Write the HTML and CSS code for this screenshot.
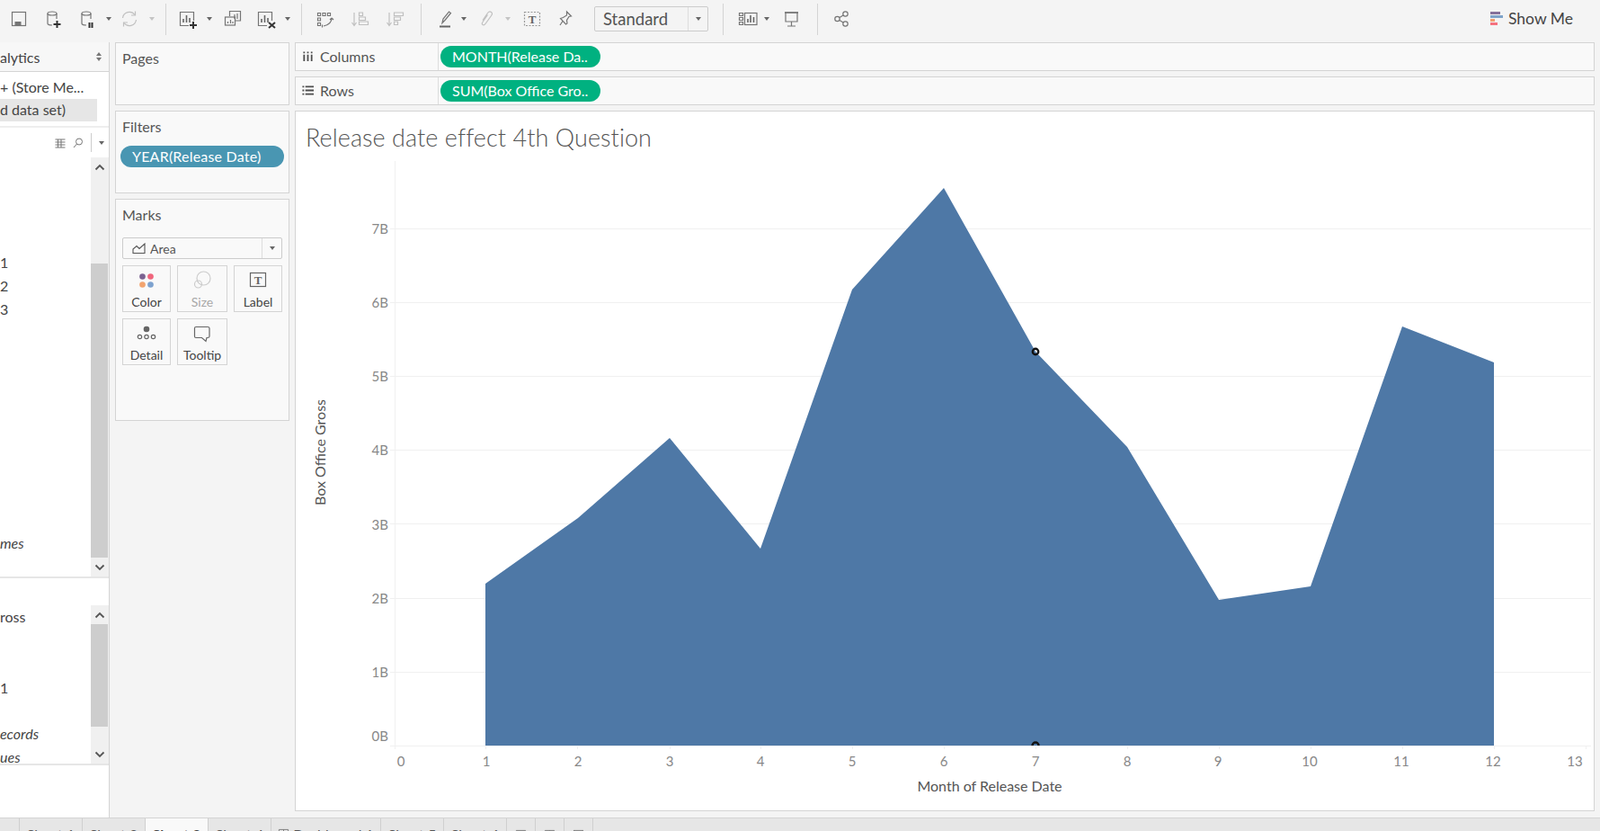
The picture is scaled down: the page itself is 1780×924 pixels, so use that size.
FILE: index.html
```html
<!DOCTYPE html>
<html lang="en">
<head>
    <meta charset="UTF-8">
    <meta name="viewport" content="width=device-width, initial-scale=1.0">
    <title>Release date effect 4th Question</title>
    <link rel="stylesheet" href="styles.css">
</head>
<body>
    <!-- Toolbar -->
    <div class="toolbar">
        <svg class="ico ml9" viewBox="0 0 24 24"><rect x="4.5" y="4.5" width="15" height="15"/><path class="solid" d="M7.5 15h7v5h-7z"/></svg>
        <svg class="ico ml14" viewBox="0 0 24 24"><ellipse cx="11" cy="6" rx="5" ry="2"/><path d="M6 6v11q0 2 5 2M16 6v6"/><path class="bold" d="M16.5 14v8M12.5 18h8"/></svg>
        <svg class="ico ml14" viewBox="0 0 24 24"><ellipse cx="11" cy="6" rx="5" ry="2"/><path d="M6 6v11q0 2 5 2M16 6v6"/><path class="bold" d="M14.5 16v6M17.5 16v6"/></svg>
        <span class="caret ml9"></span>
        <svg class="ico dim ml6" viewBox="0 0 24 24"><path d="M4.5 11a7.5 7.5 0 0 1 13.5-3.5M19.5 13a7.5 7.5 0 0 1-13.5 3.5"/><path d="M18.5 3.500v4.500h-4.500M5.500 20.500v-4.500h4.500"/></svg>
        <span class="caret dim-caret ml10"></span>
        <span class="sep ml10"></span>
        <svg class="ico ml12" viewBox="0 0 24 24"><path d="M13 19.5H3.500v-15h15V14"/><path class="mid" d="M7 16v-4M10.500 16V8M14 16v-5"/><path class="bold" d="M18 15v8M14 19h8"/></svg>
        <span class="caret ml9"></span>
        <svg class="ico ml9" viewBox="0 0 24 24"><path d="M8.5 9V3.500h12V14H15"/><path d="M14 12v-5M17 12V6"/><rect x="3.5" y="10" width="11" height="9"/><path d="M6.5 17v-2M9.500 17v-4M12 17v-2"/></svg>
        <svg class="ico ml13" viewBox="0 0 24 24"><path d="M13 19.5H3.500v-15h15V14"/><path class="mid" d="M7 16v-4M10.500 16V8M14 16v-5"/><path class="bold" d="M15 16l7 6M22 16l-7 6"/></svg>
        <span class="caret ml9"></span>
        <span class="sep ml10"></span>
        <svg class="ico ml13" viewBox="0 0 24 24"><path d="M4.5 5.500h3v3h-3zM10 5.500h3v3h-3zM15.500 5.500h3v3h-3zM4.500 11h3v3h-3zM4.500 16.500h3v3h-3z"/><path d="M20 11q0 7-9 9M9.500 18.500v3M20 11l-2 2M20 11l2 2"/></svg>
        <svg class="ico dim ml16" viewBox="0 0 24 24"><path d="M10.5 5h4v3.500h-4zM10.500 10h7v3.500h-7zM10.500 15h10v3.500h-10z"/><path d="M5 5v14M2.500 16l2.500 3.500 2.500-3.500"/></svg>
        <svg class="ico dim ml15" viewBox="0 0 24 24"><path d="M10.5 5h10v3.500h-10zM10.500 10h7v3.500h-7zM10.500 15h4v3.500h-4z"/><path d="M5 5v14M2.500 16l2.500 3.500 2.500-3.500"/></svg>
        <span class="sep ml16"></span>
        <svg class="ico ml14" viewBox="0 0 24 24"><path d="M9 16.5l1-4.500 6.500-8 2 1.500-6.500 8z"/><path class="under" d="M6 20.500h12"/></svg>
        <span class="caret ml6"></span>
        <svg class="ico dim ml8" viewBox="0 0 24 24"><path d="M8 13.5l5.500-8q2-2.500 4-1t0 4l-6.500 9q-1.500 2-3 1t0-3l5.500-8"/></svg>
        <span class="caret dim-caret ml9"></span>
        <svg class="ico ml10" viewBox="0 0 24 24"><rect class="dashed" x="3.5" y="4.500" width="17" height="15"/><text class="t-glyph" x="12" y="16.5">T</text></svg>
        <svg class="ico ml13" viewBox="0 0 24 24"><path d="M13.5 4l5 5-2.500 0.500-2.500 4 0.500 3.500-1.500 1-6-6.500 3-1 4-2.500z"/><path d="M9 14.5l-3 4.500"/></svg>
        <div class="select ml20"><span class="select-text">Standard</span><span class="select-btn"><span class="caret"></span></span></div>
        <span class="sep ml16"></span>
        <svg class="ico ml15" viewBox="0 0 24 24"><path d="M2.5 5.500h4v3h-4zM2.500 10.500h4v3h-4zM2.500 15.500h4v3h-4z"/><rect x="8.5" y="5.500" width="13.500" height="13"/><path class="mid" d="M12 16v-4M15 16V8M18.500 16v-6"/></svg>
        <span class="caret ml6"></span>
        <svg class="ico ml10" viewBox="0 0 24 24"><path d="M5 5h15" class="mid"/><path d="M6 5v10h13V5M12.500 15v5M8 20h9"/></svg>
        <span class="sep ml17"></span>
        <svg class="ico ml14" viewBox="0 0 24 24"><circle cx="7.5" cy="12" r="2.7"/><circle cx="16.5" cy="6.500" r="2.7"/><circle cx="16.5" cy="17.500" r="2.7"/><path d="M10 10.5l4-2.500M10 13.500l4 2.500"/></svg>
        <div class="showme">
            <span class="showme-bars"><i class="b1"></i><i class="b2"></i><i class="b3"></i><i class="b4"></i></span>
            <span>Show Me</span>
        </div>
    </div>

    <div class="main">
        <!-- Left pane, scrolled sideways -->
        <div class="left">
            <div class="left-head">
                <span>alytics</span>
                <svg class="updown" viewBox="0 0 6 10"><path d="M3 0l3 4H0zM3 10l3-4H0z"/></svg>
            </div>
            <div class="sources">
                <div class="source">+ (Store Me...</div>
                <div class="source active">d data set)</div>
            </div>
            <div class="find-row">
                <svg class="find-ico" viewBox="0 0 14 14"><path d="M1.5 3h11M1.500 6h11M1.500 9h11M1.500 12h11M4.500 3v9M8 3v9"/></svg>
                <svg class="find-ico search" viewBox="0 0 14 14"><circle cx="8" cy="5.5" r="3.5"/><path d="M5.5 8l-3.500 4"/></svg>
                <span class="find-sep"></span>
                <span class="caret"></span>
            </div>
            <div class="list list-dim">
                <div class="list-text">
                    <div class="sp104"></div>
                    <div class="item">1</div>
                    <div class="item">2</div>
                    <div class="item">3</div>
                    <div class="sp234"></div>
                    <div class="item em">mes</div>
                </div>
                <div class="scroll">
                    <div class="scroll-btn"><svg viewBox="0 0 12 8"><path d="M1.5 6.500L6 2l4.500 4.500"/></svg></div>
                    <div class="track t97"></div>
                    <div class="thumb th328"></div>
                    <div class="scroll-btn"><svg viewBox="0 0 12 8"><path d="M1.5 1.500L6 6l4.500-4.500"/></svg></div>
                </div>
            </div>
            <div class="list list-mea">
                <div class="list-text">
                    <div class="sp30"></div>
                    <div class="item">ross</div>
                    <div class="sp53"></div>
                    <div class="item">1</div>
                    <div class="sp25"></div>
                    <div class="item em">ecords</div>
                    <div class="item em">ues</div>
                </div>
                <div class="scroll scroll-mea">
                    <div class="scroll-btn"><svg viewBox="0 0 12 8"><path d="M1.5 6.500L6 2l4.500 4.500"/></svg></div>
                    <div class="thumb th114"></div>
                    <div class="track t20"></div>
                    <div class="scroll-btn"><svg viewBox="0 0 12 8"><path d="M1.5 1.500L6 6l4.500-4.500"/></svg></div>
                </div>
            </div>
        </div>

        <!-- Pages, filters, marks -->
        <div class="cards">
            <div class="card card-pages"><div class="card-title">Pages</div></div>
            <div class="card card-filters">
                <div class="card-title">Filters</div>
                <div class="pill pill-filter">YEAR(Release Date)</div>
            </div>
            <div class="card card-marks">
                <div class="card-title">Marks</div>
                <div class="mark-select">
                    <svg class="area-ico" viewBox="0 0 16 12"><path d="M1 11.5V7l4-3.500 3 3L14 1v10.500z"/></svg>
                    <span class="mark-type">Area</span>
                    <span class="mark-btn"><span class="caret"></span></span>
                </div>
                <div class="mark-grid">
                    <div class="mark">
                        <svg class="mark-ico" viewBox="0 0 24 24"><circle cx="7.5" cy="7.5" r="3.3" fill="#7b6291"/><circle cx="16.5" cy="7.5" r="3.3" fill="#f0657c"/><circle cx="7.5" cy="16.5" r="3.3" fill="#f2a46f"/><circle cx="16.5" cy="16.5" r="3.3" fill="#7da2cf"/></svg>
                        <span>Color</span>
                    </div>
                    <div class="mark off">
                        <svg class="mark-ico line" viewBox="0 0 24 24"><circle cx="13.5" cy="9.5" r="7.5"/><circle cx="7.5" cy="16" r="4"/></svg>
                        <span>Size</span>
                    </div>
                    <div class="mark">
                        <svg class="mark-ico line dark" viewBox="0 0 24 24"><rect x="3.5" y="3.5" width="17" height="15"/><text class="t-glyph" x="12" y="15.5">T</text></svg>
                        <span>Label</span>
                    </div>
                    <div class="mark">
                        <svg class="mark-ico line dark" viewBox="0 0 24 24"><circle class="solid" cx="12" cy="7" r="2.7"/><circle cx="4.5" cy="15.5" r="2.2"/><circle cx="12" cy="15.5" r="2.2"/><circle cx="19.5" cy="15.5" r="2.2"/></svg>
                        <span>Detail</span>
                    </div>
                    <div class="mark">
                        <svg class="mark-ico line dark" viewBox="0 0 24 24"><path d="M5 4.5h13q2 0 2 1.500v9q0 1.500-2 1.500h-1l-1 4-4.500-4H5q-1.500 0-1.500-1.500V6q0-1.500 1.500-1.500z"/></svg>
                        <span>Tooltip</span>
                    </div>
                </div>
            </div>
        </div>

        <!-- Shelves and the view -->
        <div class="work">
            <div class="shelf">
                <div class="shelf-label">
                    <svg class="shelf-ico" viewBox="0 0 14 14"><path d="M2.5 5v8M7 5v8M11.500 5v8M2.500 1.500v2M7 1.500v2M11.500 1.500v2"/></svg>
                    <span>Columns</span>
                </div>
                <div class="pill pill-field">MONTH(Release Da..</div>
            </div>
            <div class="shelf">
                <div class="shelf-label">
                    <svg class="shelf-ico" viewBox="0 0 14 14"><path d="M0.5 2.500h2M4 2.500h10M0.500 7h2M4 7h10M0.500 11.500h2M4 11.500h10"/></svg>
                    <span>Rows</span>
                </div>
                <div class="pill pill-field">SUM(Box Office Gro..</div>
            </div>
            <div class="viz">
                <div class="viz-title">Release date effect 4th Question</div>
                <svg class="chart" viewBox="329 169 1444 732">
                    <defs><clipPath id="plotClip"><rect x="329" y="169" width="1444" height="660"/></clipPath></defs>
                    <g class="grid">
                        <path d="M434 254.500H1770M434 336.500H1770M434 418.500H1770M434 500.500H1770M434 582.500H1770M434 665.500H1770M434 747.500H1770M434 829.500H1770"/>
                        <path d="M439.500 179V833M540.500 829v4M642.500 829v4M745.500 829v4M846.500 829v4M948.500 829v4M1050.500 829v4M1152.500 829v4M1254.500 829v4M1356.500 829v4M1458.500 829v4M1560.500 829v4M1662.500 829v4M1764.500 829v4"/>
                    </g>
                    <polygon class="area" points="540,649 643,576 745,487 846,610 948,322 1050,209 1152,391 1254,497 1356,667 1458,652 1560,363 1662,403 1662,829 540,829"/>
                    <circle class="dot" cx="1152" cy="391" r="3.2"/>
                    <circle class="dot" cx="1152" cy="829" r="3.5" clip-path="url(#plotClip)"/>
                    <g class="y-ticks">
                        <text x="432" y="260">7B</text>
                        <text x="432" y="342">6B</text>
                        <text x="432" y="424">5B</text>
                        <text x="432" y="506">4B</text>
                        <text x="432" y="589">3B</text>
                        <text x="432" y="671">2B</text>
                        <text x="432" y="753">1B</text>
                        <text x="432" y="824">0B</text>
                    </g>
                    <g class="x-ticks">
                        <text x="446" y="852">0</text>
                        <text x="541" y="852">1</text>
                        <text x="643" y="852">2</text>
                        <text x="745" y="852">3</text>
                        <text x="846" y="852">4</text>
                        <text x="948" y="852">5</text>
                        <text x="1050" y="852">6</text>
                        <text x="1152" y="852">7</text>
                        <text x="1254" y="852">8</text>
                        <text x="1355" y="852">9</text>
                        <text x="1457" y="852">10</text>
                        <text x="1559" y="852">11</text>
                        <text x="1661" y="852">12</text>
                        <text x="1752" y="852">13</text>
                    </g>
                    <text class="axis-title" x="1101" y="880">Month of Release Date</text>
                    <text class="axis-title" transform="translate(362 503) rotate(-90)">Box Office Gross</text>
                </svg>
            </div>
        </div>
    </div>

    <!-- Sheet tabs, cut off by the window -->
    <div class="tabs">
        <div class="tab tab-first"></div>
        <div class="tab">Sheet 1</div>
        <div class="tab">Sheet 2</div>
        <div class="tab active">Sheet 3</div>
        <div class="tab">Sheet 4</div>
        <div class="tab tab-dash">
            <svg class="tab-ico" viewBox="0 0 14 14"><path d="M1.5 1.500h11v11h-11zM7 1.500v11M1.500 7h11"/></svg>
            Dashboard 1
        </div>
        <div class="tab">Sheet 5</div>
        <div class="tab">Sheet 6</div>
        <div class="tab tab-new"><svg class="tab-ico" viewBox="0 0 14 14"><path d="M1.5 1.500h11v11h-11z"/></svg></div>
        <div class="tab tab-new"><svg class="tab-ico" viewBox="0 0 14 14"><path d="M1.5 1.500h11v11h-11zM7 1.500v11M1.500 7h11"/></svg></div>
        <div class="tab tab-new"><svg class="tab-ico" viewBox="0 0 14 14"><path d="M1.5 1.500h11v11h-11zM1.500 1.500L7 6l5.500-4.500"/></svg></div>
    </div>
</body>
</html>
```

FILE: styles.css
```css
* {
    box-sizing: border-box;
}
body {
    margin: 0;
    width: 1780px;
    height: 924px;
    overflow: hidden;
    display: flex;
    flex-direction: column;
    font-family: Lato, "Open Sans", sans-serif;
    font-size: 16px;
    color: #555;
    background-color: #f4f4f4;
}

/* toolbar */
.toolbar {
    height: 47px;
    flex: none;
    display: flex;
    align-items: center;
    padding-bottom: 5px;
}
.ico {
    width: 24px;
    height: 24px;
    flex: none;
    fill: none;
    stroke: #757575;
    stroke-width: 1.2;
}
.ico .solid {
    fill: #757575;
    stroke: none;
}
.ico .bold {
    stroke: #333;
    stroke-width: 2;
}
.ico .mid {
    stroke: #666;
    stroke-width: 1.6;
}
.ico .under {
    stroke: #666;
    stroke-width: 2;
}
.ico .dashed {
    stroke: #999;
    stroke-dasharray: 2 1.5;
}
.ico.dim {
    stroke: #c0c0c0;
}
.t-glyph {
    font-family: "Liberation Serif", serif;
    font-size: 13px;
    font-weight: bold;
    text-anchor: middle;
    fill: #666;
    stroke: none;
}
.caret {
    width: 0;
    height: 0;
    flex: none;
    border-top: 4px solid #666;
    border-left: 3px solid transparent;
    border-right: 3px solid transparent;
}
.toolbar > .caret {
    margin-right: 2px;
}
.dim-caret {
    border-top-color: #c4c4c4;
}
.sep {
    width: 1px;
    height: 35px;
    flex: none;
    background-color: #d4d4d4;
}
.ml6 { margin-left: 6px; }
.ml8 { margin-left: 8px; }
.ml9 { margin-left: 9px; }
.ml10 { margin-left: 10px; }
.ml12 { margin-left: 12px; }
.ml13 { margin-left: 13px; }
.ml14 { margin-left: 14px; }
.ml15 { margin-left: 15px; }
.ml16 { margin-left: 16px; }
.ml17 { margin-left: 17px; }
.ml20 { margin-left: 20px; }
.select {
    width: 127px;
    height: 28px;
    flex: none;
    display: flex;
    align-items: center;
    border: 1px solid #ccc;
    border-radius: 2px;
    padding-left: 9px;
    font-size: 18.5px;
    color: #555;
}
.select-text {
    flex: 1;
}
.select-btn {
    width: 22px;
    height: 26px;
    display: flex;
    align-items: center;
    justify-content: center;
    border-left: 1px solid #ddd;
}
.showme {
    margin-left: auto;
    margin-right: 30px;
    margin-bottom: 2px;
    display: flex;
    align-items: center;
    gap: 6px;
    font-size: 17.5px;
    color: #444;
}
.showme-bars {
    width: 14px;
    display: flex;
    flex-direction: column;
    gap: 1px;
}
.showme-bars i {
    display: block;
    height: 3px;
}
.b1 { width: 11px; background-color: #85709a; }
.b2 { width: 14px; background-color: #7fa3c9; }
.b3 { width: 5px; background-color: #f0a070; }
.b4 { width: 8px; background-color: #f5727f; }

/* main area */
.main {
    height: 862px;
    flex: none;
    display: flex;
    gap: 6px;
}

/* left pane */
.left {
    width: 122px;
    flex: none;
    background-color: #fff;
    border-right: 1px solid #d4d4d4;
    overflow: hidden;
}
.left-head {
    height: 33px;
    display: flex;
    align-items: center;
    justify-content: space-between;
    padding-right: 8px;
    background-color: #f7f7f7;
    border-bottom: 1px solid #d4d4d4;
    color: #444;
}
.updown {
    width: 6px;
    height: 10px;
    fill: #777;
}
.sources {
    height: 62px;
    padding-top: 5px;
    border-bottom: 2px solid #eee;
}
.source {
    height: 25px;
    line-height: 23px;
    white-space: nowrap;
    color: #444;
}
.source.active {
    width: 108px;
    background-color: #e6e6e6;
}
.find-row {
    height: 33px;
    display: flex;
    align-items: center;
    padding-left: 60px;
}
.find-ico {
    width: 14px;
    height: 14px;
    flex: none;
    fill: none;
    stroke: #777;
    stroke-width: 1;
}
.find-ico.search {
    margin-left: 6px;
}
.find-sep {
    width: 1px;
    height: 21px;
    flex: none;
    margin: 0 8px 0 7px;
    background-color: #ccc;
}
.list {
    display: flex;
    overflow: hidden;
}
.list-dim {
    height: 468px;
    border-bottom: 2px solid #e6e6e6;
}
.list-mea {
    height: 208px;
    border-bottom: 2px solid #e6e6e6;
}
.list-text {
    width: 101px;
    flex: none;
}
.item {
    height: 26px;
    line-height: 26px;
    color: #444;
    white-space: nowrap;
}
.em {
    font-style: italic;
}
.sp25 { height: 25px; }
.sp30 { height: 30px; }
.sp53 { height: 53px; }
.sp104 { height: 104px; }
.sp234 { height: 234px; }
.scroll {
    width: 20px;
    flex: none;
    display: flex;
    flex-direction: column;
    background-color: #f0f0f0;
}
.scroll-mea {
    margin-top: 30px;
    height: 176px;
}
.scroll-btn {
    height: 21px;
    flex: none;
    display: flex;
    align-items: center;
    justify-content: center;
}
.scroll-btn svg {
    width: 12px;
    height: 8px;
    fill: none;
    stroke: #555;
    stroke-width: 1.8;
}
.thumb {
    width: 19px;
    background-color: #cdcdcd;
}
.th328 { height: 328px; }
.th114 { height: 114px; }
.t97 { height: 97px; }
.t20 { height: 20px; }

/* cards */
.cards {
    width: 194px;
    flex: none;
    display: flex;
    flex-direction: column;
    gap: 6px;
}
.card {
    background-color: #f9f9f9;
    border: 1px solid #d4d4d4;
    padding: 0 7px;
}
.card-pages { height: 70px; }
.card-filters { height: 92px; }
.card-marks { height: 247px; }
.card-title {
    height: 34px;
    line-height: 34px;
    color: #555;
}
.pill {
    border-radius: 12px;
    height: 24px;
    line-height: 24px;
    color: #fff;
    white-space: nowrap;
}
.pill-filter {
    width: 182px;
    margin: 4px 0 0 -2px;
    padding-left: 13px;
    letter-spacing: 0.2px;
    background-color: #4996b2;
}
.pill-field {
    width: 178px;
    margin-left: 2px;
    padding-left: 13px;
    background-color: #00b180;
}
.mark-select {
    height: 24px;
    margin-top: 8px;
    display: flex;
    align-items: center;
    border: 1px solid #ccc;
    border-radius: 2px;
    font-size: 14px;
    padding-left: 10px;
}
.area-ico {
    width: 16px;
    height: 12px;
    flex: none;
    fill: none;
    stroke: #555;
    stroke-width: 1.1;
}
.mark-type {
    flex: 1;
    margin-left: 4px;
}
.mark-btn {
    width: 22px;
    height: 22px;
    display: flex;
    align-items: center;
    justify-content: center;
    border-left: 1px solid #ddd;
}
.mark-grid {
    display: grid;
    grid-template-columns: 54px 56px 54px;
    grid-auto-rows: 52px;
    gap: 7px;
    margin-top: 7px;
}
.mark {
    display: flex;
    flex-direction: column;
    align-items: center;
    padding-top: 4px;
    border: 1px solid #d4d4d4;
    font-size: 14px;
    color: #444;
}
.mark span {
    margin-top: 3px;
    line-height: 18px;
}
.mark.off {
    color: #a8a8a8;
}
.mark-ico {
    width: 24px;
    height: 24px;
    flex: none;
}
.mark-ico.line {
    fill: none;
    stroke: #ccc;
    stroke-width: 1.2;
}
.mark-ico.dark {
    stroke: #666;
}
.mark-ico .solid {
    fill: #666;
}

/* shelves and view */
.work {
    flex: 1;
    min-width: 0;
    margin-right: 6px;
    padding-bottom: 7px;
    display: flex;
    flex-direction: column;
    gap: 6px;
}
.shelf {
    height: 32px;
    flex: none;
    display: flex;
    align-items: center;
    background-color: #f9f9f9;
    border: 1px solid #d4d4d4;
}
.shelf-label {
    width: 159px;
    height: 30px;
    flex: none;
    display: flex;
    align-items: center;
    gap: 7px;
    padding: 0 0 2px 7px;
    border-right: 1px solid #ddd;
}
.shelf-ico {
    width: 13px;
    height: 13px;
    flex: none;
    fill: none;
    stroke: #4d4d4d;
    stroke-width: 1.9;
}
.viz {
    flex: 1;
    min-height: 0;
    background-color: #fff;
    border: 1px solid #d4d4d4;
}
.viz-title {
    height: 45px;
    padding: 14px 0 0 11px;
    font-size: 27px;
    font-weight: 300;
    letter-spacing: 0.06px;
    line-height: 30px;
    color: #555;
}
.chart {
    display: block;
    width: 1444px;
    height: 732px;
}
.grid path {
    fill: none;
    stroke: #f0f0f0;
    stroke-width: 1;
}
.area {
    fill: #4e78a6;
}
.dot {
    fill: none;
    stroke: #111;
    stroke-width: 2.4;
}
.y-ticks text {
    font-size: 15px;
    fill: #888;
    text-anchor: end;
}
.x-ticks text {
    font-size: 15px;
    fill: #888;
    text-anchor: middle;
}
.axis-title {
    font-size: 16px;
    fill: #555;
    text-anchor: middle;
}

/* tabs */
.tabs {
    flex: 1;
    display: flex;
    background-color: #e6e6e6;
    border-top: 1px solid #d4d4d4;
}
.tab {
    width: 70px;
    flex: none;
    padding-top: 9px;
    text-align: center;
    font-size: 16px;
    line-height: 17px;
    color: #555;
    border-right: 1px solid #cfcfcf;
    white-space: nowrap;
}
.tab.active {
    background-color: #f9f9f9;
    font-weight: bold;
    color: #444;
}
.tab-first { width: 22px; }
.tab-dash { width: 122px; }
.tab-new {
    width: 32px;
    padding-top: 10px;
}
.tab-ico {
    width: 13px;
    height: 13px;
    fill: none;
    stroke: #777;
    stroke-width: 1;
}
```
